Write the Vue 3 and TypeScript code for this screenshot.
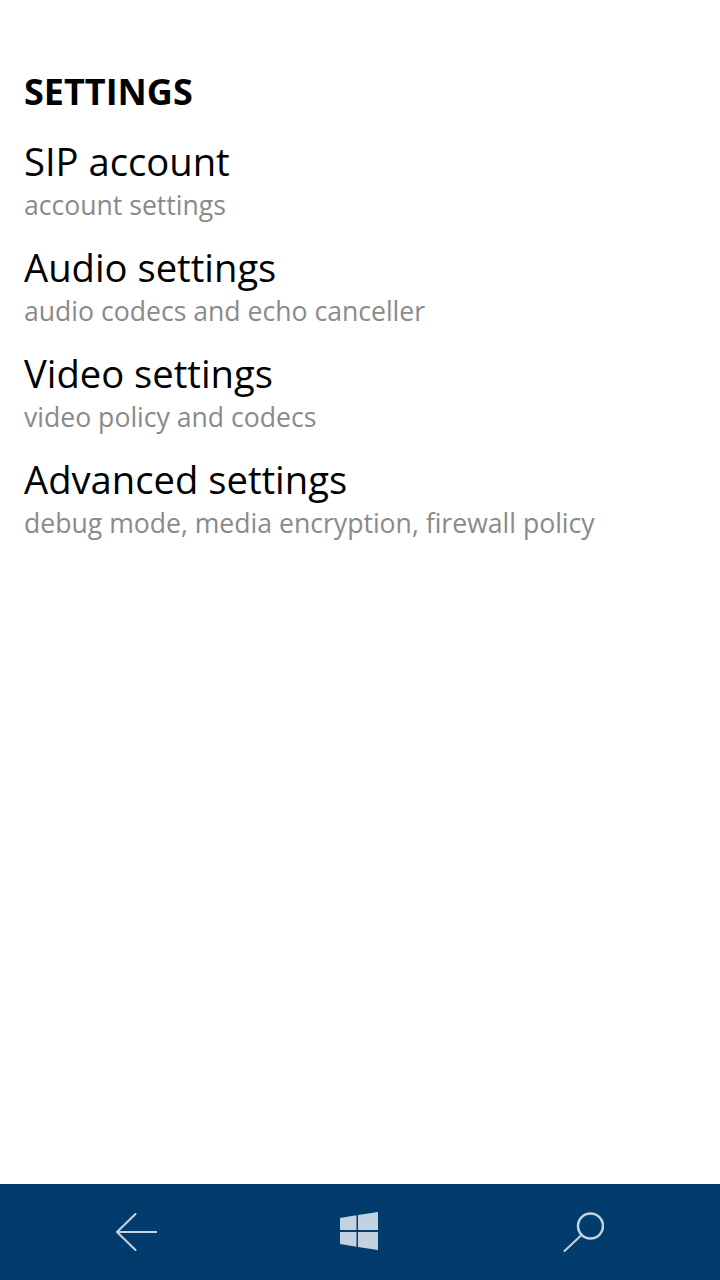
<template>
  <div class="page">
    <main class="content">
      <h1 class="title">SETTINGS</h1>
      <ul class="list">
        <li v-for="item in items" :key="item.name" class="item">
          <div class="name">{{ item.name }}</div>
          <div class="desc">{{ item.desc }}</div>
        </li>
      </ul>
    </main>
    <nav class="navbar">
      <svg width="41" height="38" viewBox="0 0 41 38">
        <path d="M1 19H41M19.500 1L1 19L19.500 37" fill="none" stroke="#c3d2e0" stroke-width="2" stroke-linecap="round" />
      </svg>
      <svg width="40" height="40" viewBox="0 0 40 40">
        <path d="M0 6L16.500 3.200V18H0ZM18 3L38 0V18H18ZM0 20H16.500V34.800L0 32ZM18 20H38V38L18 35Z" fill="#c3d2e0" />
      </svg>
      <svg width="41" height="40" viewBox="0 0 41 40">
        <circle cx="27.500" cy="14" r="12.500" fill="none" stroke="#c3d2e0" stroke-width="2.500" />
        <path d="M18 23.500L1.500 39" fill="none" stroke="#c3d2e0" stroke-width="2" stroke-linecap="round" />
      </svg>
    </nav>
  </div>
</template>

<script setup lang="ts">
const items = [
  { name: 'SIP account', desc: 'account settings' },
  { name: 'Audio settings', desc: 'audio codecs and echo canceller' },
  { name: 'Video settings', desc: 'video policy and codecs' },
  { name: 'Advanced settings', desc: 'debug mode, media encryption, firewall policy' }
]
</script>

<style scoped>
.page {
  width: 720px;
  height: 1280px;
  display: flex;
  flex-direction: column;
  background: #fff;
  font-family: "Open Sans", "Noto Sans", sans-serif;
}

.content {
  flex: 1;
  padding: 72px 24px 0;
}

.title {
  margin: 0 0 14px;
  font-size: 36px;
  line-height: 40px;
  font-weight: 700;
  color: #000;
}

.list {
  list-style: none;
  margin: 0;
  padding: 0;
}

.item {
  height: 106px;
  padding-top: 10px;
  box-sizing: border-box;
}

.name {
  font-size: 38.200px;
  line-height: 50px;
  color: #000;
}

.desc {
  margin-top: 1px;
  font-size: 26.600px;
  line-height: 36px;
  color: #8a8a8a;
}

.navbar {
  height: 96px;
  padding: 0 116px;
  background: #013c6c;
  display: flex;
  justify-content: space-between;
  align-items: center;
}
</style>
